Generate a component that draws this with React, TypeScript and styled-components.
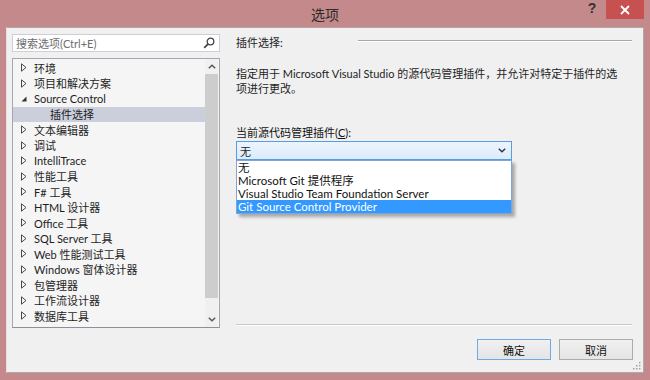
import styled, { createGlobalStyle } from "styled-components";

const treeItems: { label: string; state: "collapsed" | "expanded" | "leaf"; selected?: boolean }[] = [
  { label: "环境", state: "collapsed" },
  { label: "项目和解决方案", state: "collapsed" },
  { label: "Source Control", state: "expanded" },
  { label: "插件选择", state: "leaf", selected: true },
  { label: "文本编辑器", state: "collapsed" },
  { label: "调试", state: "collapsed" },
  { label: "IntelliTrace", state: "collapsed" },
  { label: "性能工具", state: "collapsed" },
  { label: "F# 工具", state: "collapsed" },
  { label: "HTML 设计器", state: "collapsed" },
  { label: "Office 工具", state: "collapsed" },
  { label: "SQL Server 工具", state: "collapsed" },
  { label: "Web 性能测试工具", state: "collapsed" },
  { label: "Windows 窗体设计器", state: "collapsed" },
  { label: "包管理器", state: "collapsed" },
  { label: "工作流设计器", state: "collapsed" },
  { label: "数据库工具", state: "collapsed" },
];

const providers = [
  "无",
  "Microsoft Git 提供程序",
  "Visual Studio Team Foundation Server",
  "Git Source Control Provider",
];

function App() {
  return (
    <Window>
      <GlobalStyle />
      <TitleBar>
        <span />
        <Title>选项</Title>
        <Controls>
          <Help>?</Help>
          <Close>
            <svg width="10" height="10" viewBox="0 0 10 10">
              <path d="M1 1 L9 9 M9 1 L1 9" stroke="#fff" strokeWidth="1.8" />
            </svg>
          </Close>
        </Controls>
      </TitleBar>

      <Client>
        <Body>
          <Sidebar>
            <Search>
              <Placeholder>搜索选项(Ctrl+E)</Placeholder>
              <svg width="12" height="12" viewBox="0 0 12 12">
                <circle cx="7.5" cy="4.5" r="3.3" fill="none" stroke="#444" strokeWidth="1.3" />
                <path d="M5.2 6.8 L1.2 10.8" stroke="#444" strokeWidth="1.8" />
              </svg>
            </Search>
            <Tree>
              <TreeList>
                {treeItems.map((item) => (
                  <Row key={item.label} $selected={item.selected} $child={item.state === "leaf"}>
                    <Toggle>
                      {item.state === "collapsed" && (
                        <svg width="6" height="9" viewBox="0 0 6 9">
                          <path d="M0.5 0.8 L5 4.5 L0.5 8.2 Z" fill="none" stroke="#4a4a4a" strokeWidth="1" />
                        </svg>
                      )}
                      {item.state === "expanded" && (
                        <svg width="6" height="6" viewBox="0 0 6 6">
                          <path d="M5.5 0.5 L5.5 5.5 L0.5 5.5 Z" fill="#333" />
                        </svg>
                      )}
                    </Toggle>
                    {item.label}
                  </Row>
                ))}
              </TreeList>
              <ScrollBar>
                <ScrollArrow>
                  <svg width="8" height="5" viewBox="0 0 8 5">
                    <path d="M0.8 4.3 L4 1.2 L7.2 4.3" fill="none" stroke="#555" strokeWidth="1.4" />
                  </svg>
                </ScrollArrow>
                <Thumb />
                <Track />
                <ScrollArrow>
                  <svg width="8" height="5" viewBox="0 0 8 5">
                    <path d="M0.8 0.7 L4 3.8 L7.2 0.7" fill="none" stroke="#555" strokeWidth="1.4" />
                  </svg>
                </ScrollArrow>
              </ScrollBar>
            </Tree>
          </Sidebar>

          <Panel>
            <Heading>
              <span>插件选择:</span>
              <Groove />
            </Heading>
            <Description>
              指定用于 Microsoft Visual Studio 的源代码管理插件，并允许对特定于插件的选
              <br />
              项进行更改。
            </Description>
            <Label>
              当前源代码管理插件(<u>C</u>):
            </Label>
            <Combo>
              <span>无</span>
              <svg width="8" height="5" viewBox="0 0 8 5">
                <path d="M0.8 0.7 L4 3.8 L7.2 0.7" fill="none" stroke="#333" strokeWidth="1.4" />
              </svg>
              <DropList>
                {providers.map((p, i) => (
                  <Option key={p} $active={i === providers.length - 1}>
                    {p}
                  </Option>
                ))}
              </DropList>
            </Combo>
            <Separator />
          </Panel>
        </Body>

        <Footer>
          <Button $primary>确定</Button>
          <Button>取消</Button>
        </Footer>

        <Grip>
          <svg width="8" height="8" viewBox="0 0 8 8" fill="#9a9a9a">
            <rect x="6" y="0" width="1.4" height="1.4" />
            <rect x="3" y="3" width="1.4" height="1.4" />
            <rect x="6" y="3" width="1.4" height="1.4" />
            <rect x="0" y="6" width="1.4" height="1.4" />
            <rect x="3" y="6" width="1.4" height="1.4" />
            <rect x="6" y="6" width="1.4" height="1.4" />
          </svg>
        </Grip>
      </Client>
    </Window>
  );
}

const GlobalStyle = createGlobalStyle`
  html, body {
    margin: 0;
    padding: 0;
  }
  body {
    width: 650px;
    height: 380px;
    overflow: hidden;
    font-family: Lato, "Noto Sans CJK SC", sans-serif;
  }
`;

const Window = styled.div`
  width: 650px;
  height: 380px;
  box-sizing: border-box;
  padding: 0 6px 7px;
  background: #c48a8b;
  display: flex;
  flex-direction: column;
`;

const TitleBar = styled.div`
  height: 27px;
  flex: none;
  display: grid;
  grid-template-columns: 1fr auto 1fr;
  align-items: start;
`;

const Title = styled.div`
  padding-top: 5px;
  line-height: 18px;
  font-size: 14px;
  color: #2a2a2a;
  font-family: "Noto Sans CJK SC", sans-serif;
`;

const Controls = styled.div`
  justify-self: end;
  display: flex;
  align-items: flex-start;
`;

const Help = styled.div`
  width: 14px;
  margin-right: 7px;
  height: 21px;
  line-height: 21px;
  text-align: center;
  font: bold 14px "Liberation Sans", sans-serif;
  color: #333;
`;

const Close = styled.div`
  width: 38px;
  height: 19px;
  background: #c75050;
  display: flex;
  align-items: center;
  justify-content: center;
`;

const Client = styled.div`
  position: relative;
  flex: 1;
  box-sizing: border-box;
  background: #f0f0f0;
  border: 1px solid #b4a6a6;
  border-left-color: #e8dede;
  padding: 6px 10px 12px 5px;
  display: flex;
  flex-direction: column;
  font-size: 11px;
  color: #1e1e1e;
`;

const Body = styled.div`
  height: 294px;
  display: flex;
  gap: 16px;
`;

const Sidebar = styled.div`
  width: 208px;
  display: flex;
  flex-direction: column;
  gap: 6px;
`;

const Search = styled.div`
  height: 18px;
  box-sizing: border-box;
  border: 1px solid #ccced8;
  background: #fff;
  display: flex;
  align-items: center;
  justify-content: space-between;
  padding: 0 4px 0 3px;
`;

const Placeholder = styled.span`
  color: #6d6d6d;
`;

const Tree = styled.div`
  flex: 1;
  display: flex;
  border: 1px solid #a3a7ae;
  border-bottom-color: #8d9098;
  background: #f5f5f5;
`;

const TreeList = styled.div`
  flex: 1;
  padding-top: 1px;
`;

const Row = styled.div<{ $selected?: boolean; $child?: boolean }>`
  height: 15.5px;
  display: flex;
  align-items: center;
  padding-left: ${(p) => (p.$child ? 24 : 8)}px;
  background: ${(p) => (p.$selected ? "#cbcfdc" : "transparent")};
  white-space: nowrap;
`;

const Toggle = styled.span`
  width: 13px;
  display: flex;
  align-items: center;
`;

const ScrollBar = styled.div`
  width: 13px;
  margin-right: 1px;
  display: flex;
  flex-direction: column;
  background: #f0f0f0;
`;

const ScrollArrow = styled.div`
  height: 15px;
  display: flex;
  align-items: center;
  justify-content: center;
`;

const Thumb = styled.div`
  height: 224px;
  background: #cdcdcd;
`;

const Track = styled.div`
  flex: 1;
`;

const Panel = styled.div`
  flex: 1;
  display: flex;
  flex-direction: column;
  padding-right: 1px;
`;

const Heading = styled.div`
  height: 16px;
  display: flex;
  align-items: center;
`;

const Groove = styled.div`
  width: 274px;
  margin-left: auto;
  margin-top: -3px;
  border-top: 1px solid #a8a8a8;
  border-bottom: 1px solid #ffffff;
`;

const Description = styled.p`
  margin: 16px 0 0;
  line-height: 15px;
`;

const Label = styled.div`
  margin-top: 29px;
  line-height: 15px;
  color: #111;
`;

const Combo = styled.div`
  position: relative;
  margin-top: 1px;
  width: 276px;
  height: 19px;
  box-sizing: border-box;
  border: 1px solid #569de5;
  background: linear-gradient(#ecf4fc, #dcecfc);
  display: flex;
  align-items: center;
  justify-content: space-between;
  padding: 0 5px 0 3px;
`;

const DropList = styled.div`
  position: absolute;
  left: -1px;
  top: calc(100% + 1px);
  width: 276px;
  box-sizing: border-box;
  border: 1px solid #7ea5d6;
  background: #fff;
  box-shadow: 3px 3px 3px rgba(0, 0, 0, 0.3);
  z-index: 2;
`;

const Option = styled.div<{ $active?: boolean }>`
  height: 13px;
  line-height: 13px;
  padding-left: 1px;
  font-size: 11.5px;
  white-space: nowrap;
  background: ${(p) => (p.$active ? "#3399ff" : "transparent")};
  color: ${(p) => (p.$active ? "#fff" : "#111")};
`;

const Separator = styled.div`
  margin-top: auto;
  margin-bottom: 2px;
  border-top: 1px solid #c8c8c8;
  border-bottom: 1px solid #ffffff;
`;

const Footer = styled.div`
  margin-top: 11px;
  display: flex;
  justify-content: flex-end;
  gap: 8px;
`;

const Button = styled.div<{ $primary?: boolean }>`
  width: 74px;
  height: 21px;
  box-sizing: border-box;
  border: 1px solid ${(p) => (p.$primary ? "#6eaae8" : "#acacac")};
  background: linear-gradient(#f0f0f0, #e5e5e5);
  display: flex;
  align-items: center;
  justify-content: center;
  color: #111;
`;

const Grip = styled.div`
  position: absolute;
  right: 2px;
  bottom: 2px;
  display: flex;
`;

export default App;
